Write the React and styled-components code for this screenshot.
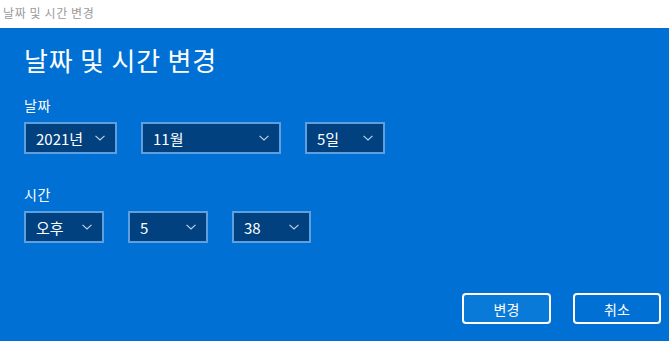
import React from "react";
import styled, { createGlobalStyle } from "styled-components";

const Global = createGlobalStyle`
  html, body { margin: 0; padding: 0; }
  body {
    width: 669px;
    height: 341px;
    overflow: hidden;
    font-family: "Noto Sans CJK KR", "Noto Sans", sans-serif;
    background: #0070d4;
  }
`;

const Window = styled.div`
  width: 669px;
  height: 341px;
  display: flex;
  flex-direction: column;
`;

const TitleBar = styled.div`
  height: 28px;
  flex: none;
  background: #ffffff;
  color: #9a9a9a;
  font-size: 12px;
  letter-spacing: 0.6px;
  line-height: 26px;
  padding-left: 3px;
`;

const Body = styled.div`
  flex: 1;
  background: #0070d4;
  color: #ffffff;
  padding: 16px 8px 0 24px;
  display: flex;
  flex-direction: column;
`;

const Heading = styled.h1`
  margin: 0;
  font-size: 26px;
  font-weight: 400;
  letter-spacing: 0.8px;
  line-height: 32px;
`;

const Label = styled.div`
  margin-top: ${(p) => p.$top}px;
  font-size: 14px;
  letter-spacing: 0.5px;
  line-height: 20px;
`;

const Row = styled.div`
  margin-top: 7px;
  display: flex;
  gap: 24px;
`;

const Select = styled.div`
  box-sizing: border-box;
  width: ${(p) => p.$w}px;
  height: 32px;
  border: 2px solid #5e9fe0;
  background: #02417f;
  display: flex;
  align-items: center;
  justify-content: space-between;
  padding: 0 10px 0 10px;
  font-size: 15px;
  color: #ffffff;
`;

const Chevron = styled.svg`
  width: 10px;
  height: 6px;
  flex: none;
`;

const Footer = styled.div`
  margin-top: 50px;
  display: flex;
  justify-content: flex-end;
  gap: 22px;
`;

const Button = styled.button`
  box-sizing: border-box;
  width: ${(p) => p.$w}px;
  height: 31px;
  border: 2px solid #ffffff;
  border-radius: 4px;
  background: ${(p) => (p.$primary ? "#0a7ad8" : "#0070d4")};
  color: #ffffff;
  font-family: inherit;
  font-size: 14px;
  padding: 0;
`;

const Drop = ({ w, children }) => (
  <Select $w={w}>
    <span>{children}</span>
    <Chevron viewBox="0 0 10 6">
      <path d="M0.5 0.8 L5 5 L9.5 0.8" fill="none" stroke="#bcd6f2" strokeWidth="1.1" />
    </Chevron>
  </Select>
);

export default function App() {
  return (
    <Window>
      <Global />
      <TitleBar>날짜 및 시간 변경</TitleBar>
      <Body>
        <Heading>날짜 및 시간 변경</Heading>
        <Label $top={19}>날짜</Label>
        <Row>
          <Drop w={93}>2021년</Drop>
          <Drop w={140}>11월</Drop>
          <Drop w={80}>5일</Drop>
        </Row>
        <Label $top={30}>시간</Label>
        <Row>
          <Drop w={80}>오후</Drop>
          <Drop w={80}>5</Drop>
          <Drop w={79}>38</Drop>
        </Row>
        <Footer>
          <Button $primary $w={89}>변경</Button>
          <Button $w={88}>취소</Button>
        </Footer>
      </Body>
    </Window>
  );
}
